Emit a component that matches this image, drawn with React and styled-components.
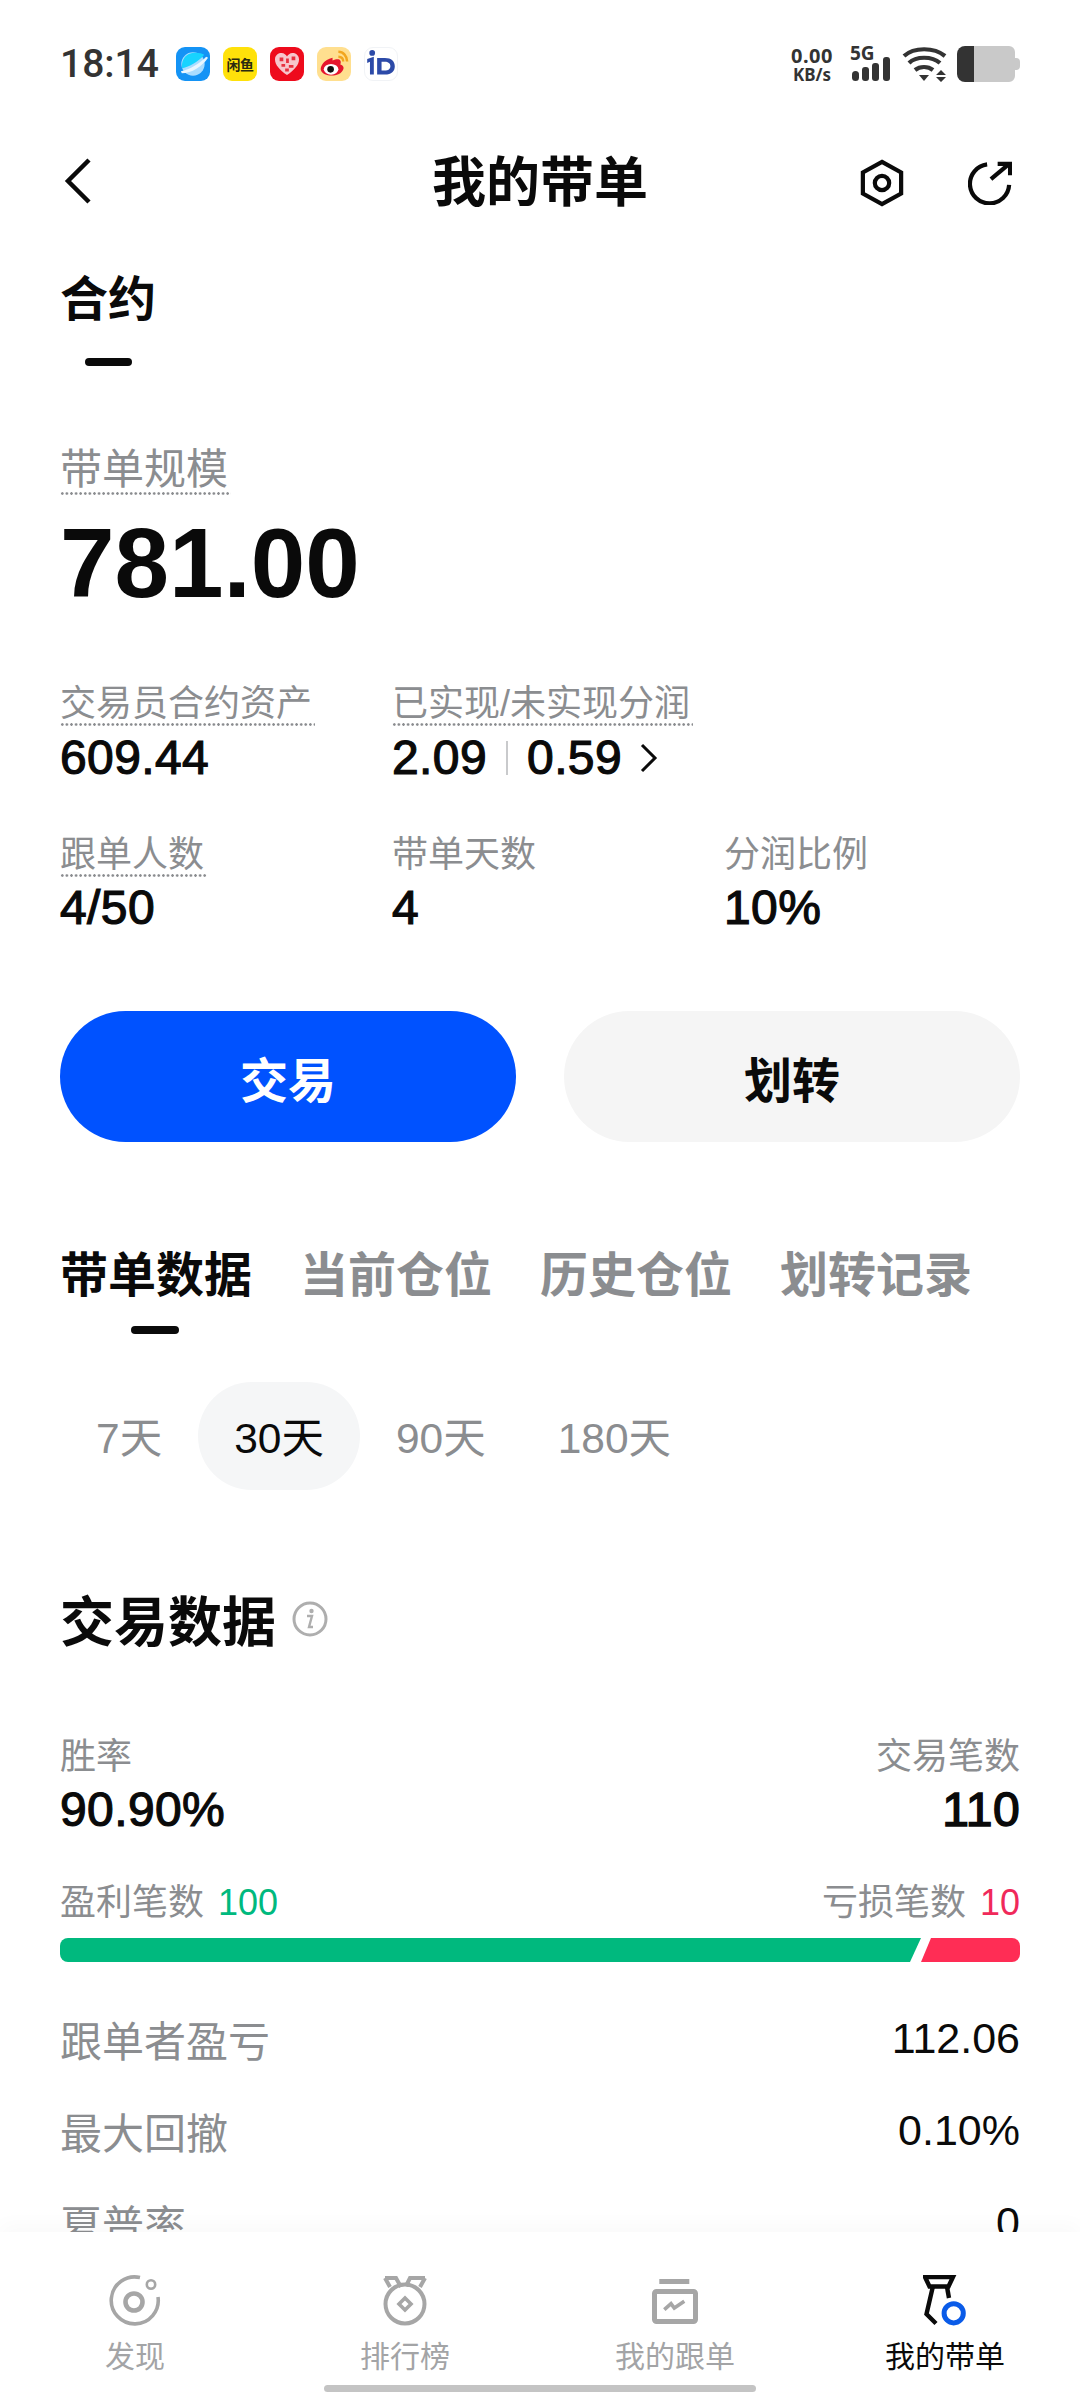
import React from "react";
import styled, { createGlobalStyle } from "styled-components";

const Global = createGlobalStyle`
  html, body { margin: 0; padding: 0; background: #fff; }
  body { font-family: "Liberation Sans", "Noto Sans CJK SC", sans-serif; color: #0a0a0a; }
  * { box-sizing: border-box; }
`;
const Page = styled.div`
  width: 1080px; height: 2392px; display: flex; flex-direction: column; position: relative; overflow: hidden; background: #fff;
`;
const Scroll = styled.div`flex: 1; min-height: 0; overflow: hidden;`;
const StatusBar = styled.div`
  height: 128px; padding: 0 60px; display: flex; align-items: center; justify-content: space-between;
`;
const StatusLeft = styled.div`display: flex; align-items: center;`;
const Time = styled.span`
  font-family: Roboto, sans-serif; font-weight: 500; font-size: 39px; color: #333; width: 116px;
`;
const AppIcons = styled.div`display: flex; gap: 13px; align-items: center;`;
const AppIcon = styled.div`
  width: 34px; height: 34px; border-radius: 9px; overflow: hidden; background: ${p => p.$bg};
  display: flex; align-items: center; justify-content: center;
  font-family: "Noto Sans CJK SC", sans-serif; font-size: 14px; font-weight: 700; color: #2a2a10; line-height: 1; letter-spacing: -0.5px;
  ${p => p.$outlined && "border: 1px solid #f1f3f6;"}
`;
const StatusRight = styled.div`display: flex; align-items: center;`;
const NetSpeed = styled.div`
  width: 46px; margin-right: 15px; display: flex; flex-direction: column; align-items: center;
  font-family: "Noto Sans", sans-serif; font-weight: 700; color: #333;
`;
const NetTop = styled.span`font-size: 20px; line-height: 20px; letter-spacing: .5px;`;
const NetBottom = styled.span`font-size: 17px; line-height: 17px;`;
const StatusGap = styled.span`width: ${p => p.$w}px;`;
const Header = styled.div`
  height: 110px; padding: 0 60px; display: flex; align-items: center; position: relative; justify-content: space-between;
`;
const Title = styled.h1`
  position: absolute; left: 0; right: 0; margin: 0; text-align: center; font-size: 54px; line-height: 70px; font-weight: 700;
`;
const BackBtn = styled.span`display: flex; margin: -5px 0 0 3px;`;
const HeaderActions = styled.div`display: flex; gap: 64px; align-items: center; margin-right: 8px; position: relative;`;
const Body = styled.div`padding: 0 60px;`;
const SubTab = styled.div`
  margin-top: 32px; font-size: 48px; line-height: 60px; font-weight: 700;
`;
const SubTabBar = styled.div`margin: 28px 0 0 25px; width: 47px; height: 8px; border-radius: 4px; background: #0a0a0a;`;
const Label = styled.span`
  display: inline-block; font-size: ${p => p.$size || 36}px; line-height: ${p => p.$lh || 44}px; color: #8b8d90; white-space: nowrap;
  ${p => p.$dotted && "padding-right: 3px; background-image: radial-gradient(circle, #8b8d90 1.1px, transparent 1.5px); background-size: 4.6px 3px; background-repeat: repeat-x; background-position: 0 100%;"}
`;
const ScaleBlock = styled.div`margin-top: 79px; height: 50px;`;
const BigValue = styled.div`
  margin-top: 13px; font-size: 98px; line-height: 110px; font-weight: 700;
`;
const Stats = styled.div`
  margin-top: 64px; display: grid; grid-template-columns: 332px 332px 1fr; row-gap: 47px;
`;
const Stat = styled.div`display: flex; flex-direction: column; align-items: flex-start;`;
const StatValue = styled.div`
  margin-top: ${p => p.$mt ?? 4}px; font-size: 48px; line-height: 56px; letter-spacing: .4px; display: flex; align-items: center; -webkit-text-stroke: 1.2px #0a0a0a;
`;
const Divider = styled.span`width: 2px; height: 34px; background: #c9cacc; margin: 0 19px;`;
const ChevronWrap = styled.span`display: flex; margin-left: 16px;`;
const Buttons = styled.div`margin-top: 75px; display: flex; gap: 48px;`;
const Button = styled.div`
  flex: 1; height: 131px; border-radius: 66px; display: flex; align-items: center; justify-content: center;
  font-size: 48px; font-weight: 700; background: ${p => p.$primary ? "#0052ff" : "#f5f5f5"}; color: ${p => p.$primary ? "#fff" : "#0a0a0a"};
`;
const Tabs = styled.div`margin-top: 104px; display: flex; gap: 48px; height: 88px;`;
const Tab = styled.div`
  position: relative; font-size: 48px; line-height: 60px; height: 60px; font-weight: 700; color: ${p => p.$active ? "#0a0a0a" : "#8b8d90"}; white-space: nowrap;
  ${p => p.$active && `&::after { content: ""; position: absolute; left: 71px; top: 80px; width: 48px; height: 8px; border-radius: 4px; background: #0a0a0a; }`}
`;
const Periods = styled.div`margin-top: 48px; display: flex;`;
const Period = styled.div`
  height: 108px; padding: 0 36px 3px; border-radius: 54px; display: flex; align-items: center; font-size: 42.5px;
  background: ${p => p.$active ? "#f5f6f7" : "transparent"}; color: ${p => p.$active ? "#0a0a0a" : "#8b8d90"};
`;
const SectionHead = styled.div`margin-top: 98px; display: flex; align-items: center; gap: 16px;`;
const SectionTitle = styled.h2`margin: 0; font-size: 54px; line-height: 70px; font-weight: 700;`;
const InfoWrap = styled.span`display: flex; margin-top: -8px;`;
const SplitRow = styled.div`margin-top: ${p => p.$mt}px; display: flex; justify-content: space-between;`;
const Col = styled.div`display: flex; flex-direction: column; align-items: ${p => p.$right ? "flex-end" : "flex-start"};`;
const SummaryValue = styled.div`
  margin-top: 5px; font-size: 48px; line-height: 52px; letter-spacing: .4px; -webkit-text-stroke: ${p => p.$strong ? "1.5px" : "1.2px"} #0a0a0a;
`;
const Count = styled.span`
  font-size: 36px; line-height: 44px; color: #8b8d90; display: flex; gap: 14px;
`;
const CountNum = styled.span`font-family: "Liberation Sans", sans-serif; font-size: 36px; color: ${p => p.$color};`;
const Bar = styled.div`margin-top: 13px; height: 24px; display: flex; border-radius: 8px; overflow: hidden;`;
const BarGreen = styled.div`
  background: #00b97e; clip-path: polygon(0 0, 100% 0, calc(100% - 11px) 100%, 0 100%);
`;
const BarRed = styled.div`
  flex: 1; background: #ff2d55; clip-path: polygon(10px 0, 100% 0, 100% 100%, 0 100%);
`;
const Rows = styled.div`margin-top: 30px;`;
const Row = styled.div`height: 92px; display: flex; align-items: center; justify-content: space-between;`;
const RowLabel = styled.span`font-size: 42px; color: #8b8d90;`;
const RowValue = styled.span`font-size: 43px; color: #0a0a0a;`;
const Nav = styled.nav`
  height: 160px; background: #fff; display: grid; grid-template-columns: repeat(4, 270px); position: relative; flex: none;
  box-shadow: 0 -8px 18px rgba(0,0,0,.025);
`;
const NavItem = styled.div`
  display: flex; flex-direction: column; align-items: center; padding-top: 42px;
`;
const NavIcon = styled.div`height: 54px; display: flex; align-items: center; justify-content: center;`;
const NavLabel = styled.span`
  margin-top: 11px; font-size: 30px; line-height: 36px; color: ${p => p.$active ? "#0a0a0a" : "#a3a4a6"};
`;
const HomeBar = styled.div`
  position: absolute; left: 324px; bottom: 0; width: 432px; height: 7px; border-radius: 4px; background: #c4c4c4;
`;

const Planet = () => (
  <svg width="34" height="34" viewBox="0 0 35 35">
    <circle cx="17.5" cy="17.5" r="12" fill="#a9dcff" />
    <path d="M6 22C12 21 24 15 29 8C25 5 12 4 8 12C6 15 6 19 6 22Z" fill="#17d3ff" />
    <path d="M5 25C14 23 25 17 31 10L33 11C27 20 16 27 6 27Z" fill="#e9f6ff" />
  </svg>
);
const Heart = () => (
  <svg width="26" height="24" viewBox="0 0 28 26">
    <path d="M14 25C6 19 1 14 1 8C1 3 5 1 8 1C11 1 13 3 14 5C15 3 17 1 20 1C23 1 27 3 27 8C27 14 22 19 14 25Z" fill="#f7c6cc" />
    <path d="M6 6h4v4H6zM13 7h3v5h-3zM19 5h4v4h-4zM8 13h4v3H8zM16 14h5v3h-5zM12 18h4v3h-4z" fill="#e8303f" />
  </svg>
);
const Weibo = () => (
  <svg width="34" height="34" viewBox="0 0 35 35">
    <path d="M16 11C7 13 3 20 4 24C6 30 18 31 24 27C29 23 28 19 24 18C26 13 22 11 16 14Z" fill="#e6162d" />
    <ellipse cx="14.5" cy="23" rx="7.5" ry="5.5" fill="#fff" />
    <circle cx="14" cy="23" r="3.4" fill="#111" />
    <path d="M22 5C27 5 31 9 31 15" stroke="#f2a61f" strokeWidth="2.6" fill="none" />
    <path d="M22 10C25 10 27 12 27 15" stroke="#f2a61f" strokeWidth="2.4" fill="none" />
  </svg>
);
const IdIcon = () => (
  <svg width="32" height="32" viewBox="3 3 29 29" fill="#2c4aa8">
    <circle cx="9.5" cy="7.5" r="2.6" />
    <path d="M5 13L11 11V27H7.5V15.5L5 16.5Z" />
    <path fillRule="evenodd" d="M14 12H21C27 12 30 15 30 19.5C30 24 27 27 21 27H14ZM18 15.5V23.5H21C24 23.5 26 22 26 19.5C26 17 24 15.5 21 15.5Z" />
  </svg>
);
const Signal = () => (
  <svg width="42" height="36" viewBox="0 0 42 36" fill="#333">
    <text x="0" y="14" fontFamily="Noto Sans, sans-serif" fontWeight="700" fontSize="19">5G</text>
    <rect x="2" y="25" width="7" height="10" rx="3.5" />
    <rect x="12" y="21" width="7" height="14" rx="3" />
    <rect x="22" y="17" width="7" height="18" rx="3" />
    <rect x="33" y="11" width="7" height="24" rx="3" />
  </svg>
);
const Wifi = () => (
  <svg width="46" height="36" viewBox="0 0 46 36" fill="none" stroke="#333" strokeWidth="4.2">
    <path d="M2 10C12 1 32 1 43 10" />
    <path d="M7 17C14 10 30 10 38 17" />
    <path d="M13 24C18 20 26 20 31 24" />
    <path d="M17 29H27L22 35Z" fill="#333" stroke="none" />
    <path d="M39 24L44 29H34Z M34 31H44L39 36Z" fill="#333" stroke="none" />
  </svg>
);
const Battery = () => (
  <svg width="63" height="36" viewBox="0 0 63 36">
    <path d="M8 0H52A6 6 0 0 1 58 6V12H59A4 4 0 0 1 63 16V20A4 4 0 0 1 59 24H58V30A6 6 0 0 1 52 36H8Z" fill="#c9c9c9" />
    <path d="M17 0H8A8 8 0 0 0 0 8V28A8 8 0 0 0 8 36H17Z" fill="#333" />
  </svg>
);
const Back = () => (
  <svg width="30" height="46" viewBox="0 0 30 46" fill="none" stroke="#0a0a0a" strokeWidth="4.5">
    <path d="M26 2L5 23L26 44" />
  </svg>
);
const Hex = () => (
  <svg width="44" height="48" viewBox="0 0 46 50" fill="none" stroke="#0a0a0a" strokeWidth="4.4">
    <path d="M23 3L43 14V36L23 47L3 36V14Z" />
    <circle cx="23" cy="25" r="7.5" />
  </svg>
);
const Share = () => (
  <svg width="44" height="44" viewBox="0 0 46 46" fill="none" stroke="#0a0a0a" strokeWidth="4.4">
    <path d="M20 3.5A20.5 20.5 0 1 0 43 25" />
    <path d="M24 19L43 3" />
    <path d="M31 3H44V15" />
  </svg>
);
const Chevron = () => (
  <svg width="22" height="30" viewBox="0 0 22 30" fill="none" stroke="#0a0a0a" strokeWidth="3">
    <path d="M4 2L17 15L4 28" />
  </svg>
);
const Info = () => (
  <svg width="36" height="36" viewBox="0 0 36 36">
    <circle cx="18" cy="18" r="16" fill="none" stroke="#aeaeae" strokeWidth="3" />
    <circle cx="19.5" cy="10" r="2.2" fill="#aeaeae" />
    <path d="M15 15H20L17 26H21" fill="none" stroke="#aeaeae" strokeWidth="2.4" />
  </svg>
);
const NavDiscover = () => (
  <svg width="52" height="52" viewBox="0 0 52 52" fill="none" stroke="#a6a6a6">
    <path d="M31 2.5A23.5 23.5 0 1 0 49 22" strokeWidth="3.6" />
    <circle cx="25" cy="27" r="8.5" strokeWidth="4.6" />
    <circle cx="42" cy="9.5" r="4.2" strokeWidth="2.6" />
  </svg>
);
const NavRank = () => (
  <svg width="44" height="50" viewBox="0 0 44 50" fill="none" stroke="#a6a6a6" strokeWidth="4">
    <circle cx="22" cy="28" r="19.5" />
    <path d="M2 2H13L18 11M2 2L7 11" />
    <path d="M42 2H27L23 10M42 2L37 11" />
    <path d="M22 22L28 28L22 34L16 28Z" strokeWidth="3.6" />
  </svg>
);
const NavCopy = () => (
  <svg width="46" height="45" viewBox="0 0 46 45" fill="none" stroke="#a6a6a6">
    <rect x="7.3" y="0" width="30" height="5" fill="#a6a6a6" stroke="none" />
    <rect x="2.5" y="12.5" width="41" height="30" rx="2" strokeWidth="5" />
    <path d="M12.3 30.6L19 24.6L22.3 29L32.3 22.3" strokeWidth="3.6" />
  </svg>
);
const NavLead = () => (
  <svg width="44" height="52" viewBox="0 0 44 52" fill="none" stroke="#0a0a0a" strokeWidth="4.4">
    <path d="M2 2H30L25.5 11.5H6.5Z" />
    <path d="M24 12L26 23" />
    <path d="M10 11L3.5 39L13 48.5" />
    <circle cx="30.7" cy="38.3" r="9.6" stroke="#0a5be8" strokeWidth="5" />
  </svg>
);

export default function App() {
  const green = 861;
  return (
    <Page>
      <Global />
      <Scroll>
        <StatusBar>
          <StatusLeft>
            <Time>18:14</Time>
            <AppIcons>
              <AppIcon $bg="#1493f5"><Planet /></AppIcon>
              <AppIcon $bg="#ffe10a">闲鱼</AppIcon>
              <AppIcon $bg="#ee0b1c"><Heart /></AppIcon>
              <AppIcon $bg="#ffdf8f"><Weibo /></AppIcon>
              <AppIcon $bg="#fff" $outlined><IdIcon /></AppIcon>
            </AppIcons>
          </StatusLeft>
          <StatusRight>
            <NetSpeed>
              <NetTop>0.00</NetTop>
              <NetBottom>KB/s</NetBottom>
            </NetSpeed>
            <Signal />
            <StatusGap $w={10} />
            <Wifi />
            <StatusGap $w={9} />
            <Battery />
          </StatusRight>
        </StatusBar>
        <Header>
          <Title>我的带单</Title>
          <BackBtn><Back /></BackBtn>
          <HeaderActions>
            <Hex />
            <Share />
          </HeaderActions>
        </Header>
        <Body>
          <SubTab>合约</SubTab>
          <SubTabBar />
          <ScaleBlock><Label $size={42} $lh={50} $dotted>带单规模</Label></ScaleBlock>
          <BigValue>781.00</BigValue>
          <Stats>
            <Stat>
              <Label $dotted>交易员合约资产</Label>
              <StatValue>609.44</StatValue>
            </Stat>
            <Stat>
              <Label $dotted>已实现/未实现分润</Label>
              <StatValue>2.09<Divider />0.59<ChevronWrap><Chevron /></ChevronWrap></StatValue>
            </Stat>
            <div />
            <Stat>
              <Label $dotted>跟单人数</Label>
              <StatValue $mt={3}>4/50</StatValue>
            </Stat>
            <Stat>
              <Label>带单天数</Label>
              <StatValue $mt={3}>4</StatValue>
            </Stat>
            <Stat>
              <Label>分润比例</Label>
              <StatValue $mt={3}>10%</StatValue>
            </Stat>
          </Stats>
          <Buttons>
            <Button $primary>交易</Button>
            <Button>划转</Button>
          </Buttons>
          <Tabs>
            <Tab $active>带单数据</Tab>
            <Tab>当前仓位</Tab>
            <Tab>历史仓位</Tab>
            <Tab>划转记录</Tab>
          </Tabs>
          <Periods>
            <Period>7天</Period>
            <Period $active>30天</Period>
            <Period>90天</Period>
            <Period>180天</Period>
          </Periods>
          <SectionHead>
            <SectionTitle>交易数据</SectionTitle>
            <InfoWrap><Info /></InfoWrap>
          </SectionHead>
          <SplitRow $mt={77}>
            <Col>
              <Label>胜率</Label>
              <SummaryValue>90.90%</SummaryValue>
            </Col>
            <Col $right>
              <Label>交易笔数</Label>
              <SummaryValue $strong>110</SummaryValue>
            </Col>
          </SplitRow>
          <SplitRow $mt={45}>
            <Count>盈利笔数<CountNum $color="#00b97e">100</CountNum></Count>
            <Count>亏损笔数<CountNum $color="#f0295a">10</CountNum></Count>
          </SplitRow>
          <Bar>
            <BarGreen style={{ width: green }} />
            <BarRed />
          </Bar>
          <Rows>
            <Row><RowLabel>跟单者盈亏</RowLabel><RowValue>112.06</RowValue></Row>
            <Row><RowLabel>最大回撤</RowLabel><RowValue>0.10%</RowValue></Row>
            <Row><RowLabel>夏普率</RowLabel><RowValue>0</RowValue></Row>
          </Rows>
        </Body>
      </Scroll>
      <Nav>
        <NavItem><NavIcon><NavDiscover /></NavIcon><NavLabel>发现</NavLabel></NavItem>
        <NavItem><NavIcon><NavRank /></NavIcon><NavLabel>排行榜</NavLabel></NavItem>
        <NavItem><NavIcon><NavCopy /></NavIcon><NavLabel>我的跟单</NavLabel></NavItem>
        <NavItem><NavIcon><NavLead /></NavIcon><NavLabel $active>我的带单</NavLabel></NavItem>
        <HomeBar />
      </Nav>
    </Page>
  );
}
